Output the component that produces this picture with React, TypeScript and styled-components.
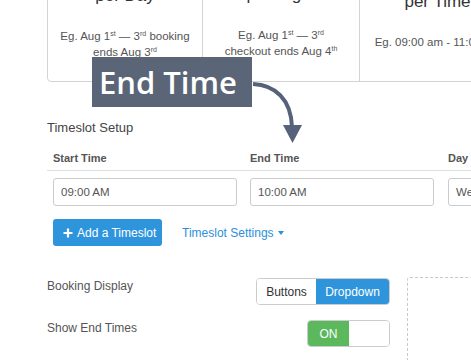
import React from 'react';
import styled, { createGlobalStyle } from 'styled-components';

const GlobalStyle = createGlobalStyle`
  html, body {
    margin: 0;
    padding: 0;
    background: #fff;
  }
  body {
    font-family: 'Liberation Sans', Arial, sans-serif;
    overflow: hidden;
  }
`;

interface PriceCard {
  title: string;
  lines: React.ReactNode[];
  top: number;
  width: number;
}

const cards: PriceCard[] = [
  {
    title: 'per Day',
    top: 15,
    width: 156,
    lines: [
      <>
        Eg. Aug 1<sup>st</sup> — 3<sup>rd</sup> booking
      </>,
      <>
        ends Aug 3<sup>rd</sup>
      </>,
    ],
  },
  {
    title: 'per Night',
    top: 14,
    width: 157,
    lines: [
      <>
        Eg. Aug 1<sup>st</sup> — 3<sup>rd</sup>
      </>,
      <>
        checkout ends Aug 4<sup>th</sup>
      </>,
    ],
  },
  {
    title: 'per Time',
    top: 21,
    width: 156,
    lines: [<>Eg. 09:00 am - 11:00 am</>],
  },
];

const App: React.FC = () => {
  return (
    <Page>
      <GlobalStyle />
      <CardsRow>
        {cards.map((card, i) => (
          <Card key={card.title} $top={card.top} $width={card.width} $first={i === 0}>
            <CardTitle>{card.title}</CardTitle>
            <CardDesc>
              {card.lines.map((line, j) => (
                <div key={j}>{line}</div>
              ))}
            </CardDesc>
          </Card>
        ))}
      </CardsRow>

      <SectionTitle>Timeslot Setup</SectionTitle>
      <HeaderRow>
        <span>Start Time</span>
        <span>End Time</span>
        <span>Day of Week</span>
      </HeaderRow>
      <InputRow>
        <TimeInput>09:00 AM</TimeInput>
        <TimeInput>10:00 AM</TimeInput>
        <TimeInput>Wednesday</TimeInput>
      </InputRow>

      <Actions>
        <PrimaryButton>
          <svg width="10" height="10" viewBox="0 0 10 10">
            <path d="M5 0.5v9M0.5 5h9" stroke="#fff" strokeWidth="2.2" />
          </svg>
          Add a Timeslot
        </PrimaryButton>
        <LinkButton>
          Timeslot Settings
          <Caret />
        </LinkButton>
      </Actions>

      <SettingsArea>
        <SettingsList>
          <SettingRow>
            <SettingLabel>Booking Display</SettingLabel>
            <Segmented>
              <Segment>Buttons</Segment>
              <Segment $active>Dropdown</Segment>
            </Segmented>
          </SettingRow>
          <SettingRow>
            <SettingLabel>Show End Times</SettingLabel>
            <Toggle>
              <ToggleOn>ON</ToggleOn>
              <ToggleOff />
            </Toggle>
          </SettingRow>
        </SettingsList>
        <PreviewPanel />
      </SettingsArea>

      <Callout>End Time</Callout>
      <Arrow width="60" height="70" viewBox="0 0 60 70">
        <path d="M2 9 C24 10 40 24 41 52" fill="none" stroke="#56617a" strokeWidth="4" />
        <polygon points="32,50 51,50 41.5,68" fill="#56617a" />
      </Arrow>
    </Page>
  );
};

const Page = styled.div`
  position: relative;
  width: 471px;
  height: 360px;
  overflow: hidden;
  padding-left: 47px;
  box-sizing: border-box;
  color: #555;
`;

const CardsRow = styled.div`
  display: flex;
  margin-top: -30px;
  height: 112px;
  width: 560px;
`;

const Card = styled.div<{ $top: number; $width: number; $first?: boolean }>`
  flex: 0 0 ${(p) => p.$width}px;
  box-sizing: border-box;
  padding-top: ${(p) => p.$top}px;
  border: 1px solid #d3d3d3;
  border-left-width: ${(p) => (p.$first ? 1 : 0)}px;
  border-radius: ${(p) => (p.$first ? '0 0 0 4px' : '0')};
  text-align: center;
`;

const CardTitle = styled.div`
  font-size: 17px;
  line-height: 20px;
  color: #333;
  white-space: nowrap;
`;

const CardDesc = styled.div`
  margin-top: 22px;
  font-size: 11.5px;
  line-height: 16px;
  color: #555;
  white-space: nowrap;
  sup {
    font-size: 7px;
    line-height: 0;
    vertical-align: 4px;
  }
`;

const SectionTitle = styled.div`
  margin-top: 37px;
  font-size: 13px;
  line-height: 18px;
  color: #444;
`;

const HeaderRow = styled.div`
  display: grid;
  grid-template-columns: 197px 198px 197px;
  margin-top: 13px;
  padding: 0 0 4px 6px;
  border-bottom: 1px solid #dedede;
  font-size: 11px;
  line-height: 16px;
  font-weight: 700;
  color: #555;
  white-space: nowrap;
`;

const InputRow = styled.div`
  display: grid;
  grid-template-columns: 197px 198px 197px;
  margin-top: 7px;
  padding-left: 6px;
`;

const TimeInput = styled.div`
  width: 184px;
  height: 28px;
  box-sizing: border-box;
  border: 1px solid #cccccc;
  border-radius: 3px;
  padding-left: 7px;
  display: flex;
  align-items: center;
  font-size: 11.5px;
  color: #555;
`;

const Actions = styled.div`
  display: flex;
  align-items: center;
  gap: 20px;
  margin-top: 13px;
  padding-left: 6px;
`;

const PrimaryButton = styled.button`
  display: flex;
  align-items: center;
  gap: 4px;
  width: 109px;
  height: 27px;
  box-sizing: border-box;
  padding: 0 0 0 10px;
  border: none;
  border-radius: 3px;
  background: #2e95dd;
  color: #fff;
  font-family: 'Liberation Sans', Arial, sans-serif;
  font-size: 12px;
  white-space: nowrap;
`;

const LinkButton = styled.span`
  display: flex;
  align-items: center;
  gap: 4px;
  color: #2b8fdc;
  font-size: 12px;
`;

const Caret = styled.span`
  width: 0;
  height: 0;
  border-left: 3.5px solid transparent;
  border-right: 3.5px solid transparent;
  border-top: 4px solid #2b8fdc;
`;

const SettingsArea = styled.div`
  display: flex;
  align-items: flex-start;
  margin-top: 31px;
  width: 520px;
`;

const SettingsList = styled.div`
  flex: 0 0 343px;
  display: flex;
  flex-direction: column;
  gap: 15px;
  margin-top: 1px;
`;

const SettingRow = styled.div`
  display: flex;
  align-items: flex-start;
  justify-content: space-between;
  height: 27px;
`;

const SettingLabel = styled.span`
  padding-top: 1px;
  font-size: 12px;
  line-height: 14px;
  color: #555;
`;

const Segmented = styled.div`
  display: flex;
  height: 27px;
  box-sizing: border-box;
  border: 1px solid #cccccc;
  border-radius: 4px;
  overflow: hidden;
`;

const Segment = styled.div<{ $active?: boolean }>`
  display: flex;
  align-items: center;
  justify-content: center;
  width: ${(p) => (p.$active ? 73 : 59)}px;
  font-size: 12px;
  color: ${(p) => (p.$active ? '#fff' : '#333')};
  background: ${(p) => (p.$active ? '#2e95dd' : '#fff')};
`;

const Toggle = styled.div`
  display: flex;
  width: 83px;
  height: 27px;
  box-sizing: border-box;
  border: 1px solid #cccccc;
  border-radius: 4px;
  overflow: hidden;
`;

const ToggleOn = styled.div`
  width: 41px;
  display: flex;
  align-items: center;
  justify-content: center;
  background: #5cb85c;
  color: #fff;
  font-size: 12px;
`;

const ToggleOff = styled.div`
  flex: 1;
  background: #fff;
`;

const PreviewPanel = styled.div`
  flex: 0 0 120px;
  margin-left: 17px;
  height: 140px;
  border: 1px dashed #c8c8c8;
  border-radius: 3px;
`;

const Callout = styled.div`
  position: absolute;
  left: 92px;
  top: 57px;
  width: 160px;
  height: 50px;
  box-sizing: border-box;
  padding-left: 7px;
  display: flex;
  align-items: center;
  background: #5a6577;
  color: #fff;
  font-family: 'Open Sans', sans-serif;
  font-weight: 600;
  font-size: 31px;
  white-space: nowrap;
`;

const Arrow = styled.svg`
  position: absolute;
  left: 251px;
  top: 75px;
`;

export default App;
